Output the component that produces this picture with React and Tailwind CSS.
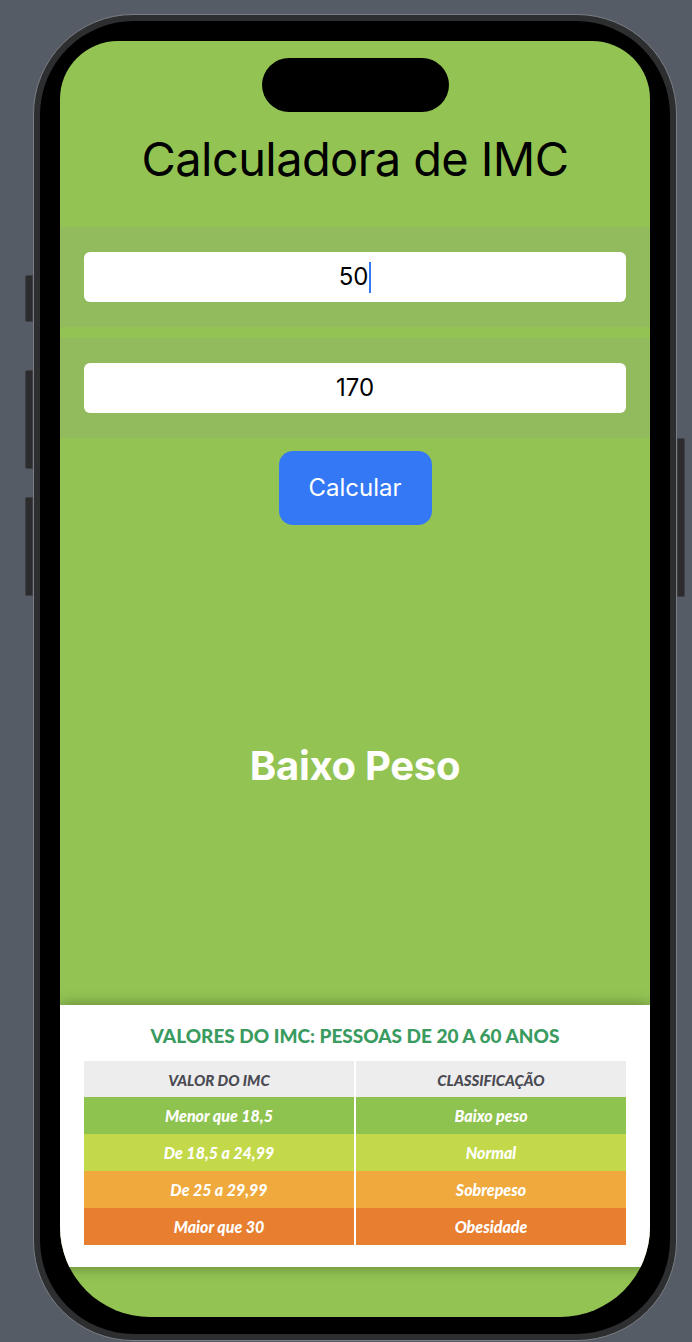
import React from 'react';

// Tabela de referência do IMC
const faixas = [
  { valor: 'Menor que 18,5', classe: 'Baixo peso', cor: 'bg-[#8fc34f]' },
  { valor: 'De 18,5 a 24,99', classe: 'Normal', cor: 'bg-[#c3d94a]' },
  { valor: 'De 25 a 29,99', classe: 'Sobrepeso', cor: 'bg-[#efa93c]' },
  { valor: 'Maior que 30', classe: 'Obesidade', cor: 'bg-[#e77e30]' },
];

const sf = { fontFamily: 'Inter, "Liberation Sans", sans-serif' };
const tabelaFont = { fontFamily: 'Lato, "Open Sans", sans-serif' };

function Campo({ valor, cursor }) {
  return (
    <div className="h-[100px] bg-[#91bb5c] px-[24px] pt-[25px]">
      <div className="h-[50px] rounded-[6px] bg-white flex items-center justify-center text-[24px] text-black" style={sf}>
        <span>{valor}</span>
        {cursor && <span className="ml-[1px] w-[2px] h-[31px] bg-[#3478f6]" />}
      </div>
    </div>
  );
}

export default function App() {
  return (
    <div className="relative w-[692px] h-[1342px] bg-[#565c65] overflow-hidden">
      {/* botões laterais */}
      <div className="absolute left-[25px] top-[275px] w-[8px] h-[47px] rounded-l-[2px] bg-[#2c2c2e] border border-[#3e3f42]" />
      <div className="absolute left-[25px] top-[370px] w-[8px] h-[99px] rounded-l-[2px] bg-[#2c2c2e] border border-[#3e3f42]" />
      <div className="absolute left-[25px] top-[497px] w-[8px] h-[99px] rounded-l-[2px] bg-[#2c2c2e] border border-[#3e3f42]" />
      <div className="absolute left-[677px] top-[438px] w-[8px] h-[159px] rounded-r-[2px] bg-[#2c2c2e] border border-[#3e3f42]" />

      {/* moldura do telefone */}
      <div className="ml-[33px] mt-[14px] w-[644px] h-[1327px] rounded-[100px] bg-[#2d2e30] border border-[#7a7e84] p-[6px]">
        <div className="w-full h-full rounded-[94px] bg-black px-[20px] pt-[20px] pb-[17px]">
          <div className="w-full h-full rounded-t-[58px] rounded-b-[90px] bg-[#93c453] overflow-hidden flex flex-col">
            <div className="mt-[17px] mx-auto w-[187px] h-[54px] rounded-full bg-black" />

            <h1 className="mt-[18px] h-[97px] text-center text-[47px] leading-[58px] text-black tracking-[-0.6px]" style={sf}>
              Calculadora de IMC
            </h1>

            <Campo valor="50" cursor />
            <div className="h-[11px]" />
            <Campo valor="170" />

            <button className="mt-[13px] mx-auto w-[153px] h-[74px] rounded-[14px] bg-[#3478f6] text-white text-[24px]" style={sf}>
              Calcular
            </button>

            <div className="flex-1 flex items-center justify-center pt-[2px]">
              <p className="text-white text-[40px] font-bold tracking-[-0.3px]" style={sf}>Baixo Peso</p>
            </div>

            <div className="h-[262px] bg-white shadow-[0_0_14px_rgba(0,0,0,0.35)] px-[24px] pt-[18px]" style={tabelaFont}>
              <h2 className="text-center text-[19px] font-black text-[#3a9b60] leading-[26px]">
                VALORES DO IMC: PESSOAS DE 20 A 60 ANOS
              </h2>
              <div className="mt-[12px] grid grid-cols-2 gap-x-[2px] bg-white">
                <div className="h-[36px] pt-[3px] bg-[#ededee] flex items-center justify-center text-[15px] font-black italic text-[#4a4a52]">
                  VALOR DO IMC
                </div>
                <div className="h-[36px] pt-[3px] bg-[#ededee] flex items-center justify-center text-[15px] font-black italic text-[#4a4a52]">
                  CLASSIFICAÇÃO
                </div>
                {faixas.map((f) => (
                  <React.Fragment key={f.valor}>
                    <div className={`h-[37px] ${f.cor} flex items-center justify-center text-[16px] font-black italic text-white`}>
                      {f.valor}
                    </div>
                    <div className={`h-[37px] ${f.cor} flex items-center justify-center text-[16px] font-black italic text-white`}>
                      {f.classe}
                    </div>
                  </React.Fragment>
                ))}
              </div>
            </div>

            <div className="h-[50px]" />
          </div>
        </div>
      </div>
    </div>
  );
}
